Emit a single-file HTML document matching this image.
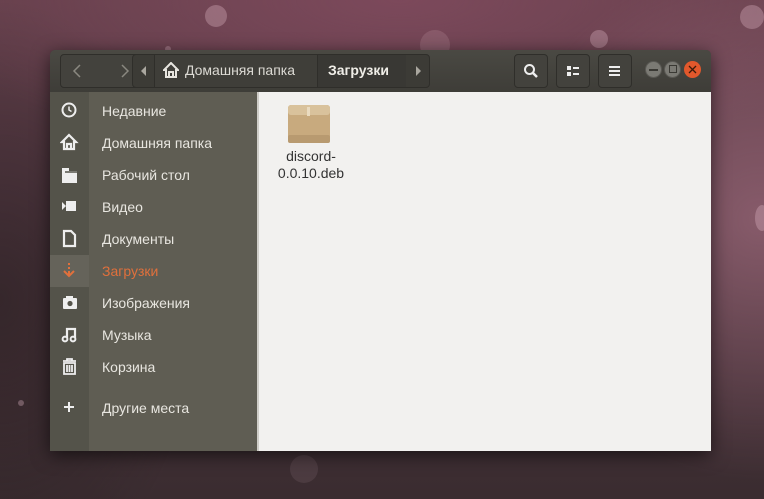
<!DOCTYPE html>
<html><head><meta charset="utf-8"><style>
*{margin:0;padding:0;box-sizing:border-box}
body{width:764px;height:499px;overflow:hidden;position:relative;font-family:"Liberation Sans","DejaVu Sans",sans-serif;
background:
radial-gradient(ellipse 260px 260px at 760px 220px,rgba(180,120,140,.55),transparent),
radial-gradient(ellipse 500px 160px at 400px 0px,rgba(130,75,95,.8),transparent),
radial-gradient(ellipse 200px 300px at 0px 300px,rgba(40,30,32,.6),transparent),
linear-gradient(180deg,#64404b 0%,#523842 40%,#3a2c30 100%);}
.dot{position:absolute;border-radius:50%;background:rgba(220,180,195,.35)}
.win{position:absolute;left:50px;top:50px;width:661px;height:401px;background:#3d3c37;box-shadow:0 4px 18px rgba(0,0,0,.6);border-radius:5px 5px 0 0;overflow:hidden}
.hdr{position:absolute;left:0;top:0;width:661px;height:42px;background:linear-gradient(#4a4943,#3e3d38)}
.btn{position:absolute;top:4px;height:34px;border:1px solid #2f2e2a;border-radius:4px;background:#43423d}
.side1{position:absolute;left:0;top:42px;width:39px;height:359px;background:#54534a}
.side2{position:absolute;left:39px;top:42px;width:168px;height:359px;background:#5f5d53}
.sel{position:absolute;left:0;top:205px;width:39px;height:32px;background:#65635a}
.div{position:absolute;left:207px;top:42px;width:2px;height:359px;background:#cfcdc8}
.cont{position:absolute;left:209px;top:42px;width:452px;height:359px;background:#f2f1ef}
.it{position:absolute;left:52px;font-size:14px;color:#e8e6e0;height:20px;line-height:20px}
.ic{position:absolute;left:10px;width:20px;height:20px}
</style></head><body>
<div class="dot" style="left:205px;top:5px;width:22px;height:22px"></div>
<div class="dot" style="left:420px;top:30px;width:30px;height:30px;opacity:.5"></div>
<div class="dot" style="left:590px;top:30px;width:18px;height:18px"></div>
<div class="dot" style="left:740px;top:5px;width:24px;height:24px"></div>
<div class="dot" style="left:755px;top:205px;width:14px;height:26px"></div>
<div class="dot" style="left:165px;top:46px;width:6px;height:6px"></div>
<div class="dot" style="left:18px;top:400px;width:6px;height:6px"></div>
<div class="dot" style="left:290px;top:455px;width:28px;height:28px;opacity:.3"></div>
<div class="win">
<div class="hdr"></div>
<div class="btn" style="left:10px;width:90px"></div>
<svg style="position:absolute;left:22px;top:14px" width="60" height="14"><path d="M8 1 L2 7 L8 13" stroke="#8a8880" stroke-width="1.5" fill="none"/><path d="M50 1 L56 7 L50 13" stroke="#8a8880" stroke-width="1.5" fill="none"/></svg>
<div class="btn" style="left:82px;width:298px;background:#3c3b36;left:82px"></div>
<div style="position:absolute;left:104px;top:4px;width:164px;height:34px;background:#3f3e39;border:1px solid #2f2e2a"></div>
<div style="position:absolute;left:268px;top:5px;width:88px;height:32px;background:#393834"></div>
<svg style="position:absolute;left:90px;top:15px" width="8" height="12"><path d="M6 1 L1 6 L6 11Z" fill="#aaa79f"/></svg>
<svg style="position:absolute;left:364px;top:15px" width="8" height="12"><path d="M2 1 L7 6 L2 11Z" fill="#aaa79f"/></svg>
<svg style="position:absolute;left:113px;top:12px" width="16" height="16"><path d="M8 1 L1 8 H3 V15 H13 V8 H15 Z M6 15 V10 H10 V15" fill="none" stroke="#e8e6e0" stroke-width="2"/></svg>
<div style="position:absolute;left:135px;top:12px;font-size:14px;color:#dcdad4">Домашняя папка</div>
<div style="position:absolute;left:278px;top:12px;font-size:14px;color:#f0eee8;font-weight:bold">Загрузки</div>
<div class="btn" style="left:464px;width:34px"></div>
<svg style="position:absolute;left:473px;top:13px" width="16" height="16"><circle cx="6.5" cy="6.5" r="4.5" stroke="#eee" stroke-width="2" fill="none"/><path d="M10 10 L14 14" stroke="#eee" stroke-width="2.5"/></svg>
<div class="btn" style="left:506px;width:34px"></div>
<svg style="position:absolute;left:516px;top:14px" width="14" height="14"><rect x="1" y="2" width="4" height="4" fill="#eee"/><rect x="1" y="8" width="4" height="4" fill="#eee"/><rect x="7" y="3" width="6" height="2" fill="#eee"/><rect x="7" y="9" width="6" height="2" fill="#eee"/></svg>
<div class="btn" style="left:548px;width:34px"></div>
<svg style="position:absolute;left:558px;top:14px" width="14" height="14"><rect x="1" y="2" width="11" height="2" fill="#eee"/><rect x="1" y="6" width="11" height="2" fill="#eee"/><rect x="1" y="10" width="11" height="2" fill="#eee"/></svg>
<div style="position:absolute;left:595px;top:11px;width:17px;height:17px;border-radius:50%;background:#7b7a74;border:1px solid #5a5954"></div>
<div style="position:absolute;left:599px;top:19px;width:9px;height:1.5px;background:#3a3934"></div>
<div style="position:absolute;left:614px;top:11px;width:17px;height:17px;border-radius:50%;background:#7b7a74;border:1px solid #5a5954"></div>
<div style="position:absolute;left:619px;top:15px;width:8px;height:8px;border:1.5px solid #3a3934"></div>
<div style="position:absolute;left:634px;top:11px;width:17px;height:17px;border-radius:50%;background:#e2582c"></div>
<svg style="position:absolute;left:638px;top:15px" width="9" height="9"><path d="M1 1 L8 8 M8 1 L1 8" stroke="#3a1a0a" stroke-width="1.3"/></svg>
<div class="side1"></div><div class="side2"></div><div class="sel"></div><div class="div"></div><div class="cont"></div>
<svg class="ic" style="top:51px"><circle cx="9" cy="9" r="6.5" stroke="#eee" stroke-width="2" fill="none"/><path d="M9 5.5 V9 L11.5 10.5" stroke="#eee" stroke-width="1.5" fill="none"/></svg>
<div class="it" style="top:51px">Недавние</div>
<svg class="ic" style="top:83px"><path d="M9 2 L2 9 H4 V16 H14 V9 H16 Z M7 16 V11 H11 V16" fill="none" stroke="#eee" stroke-width="2.2"/></svg>
<div class="it" style="top:83px">Домашняя папка</div>
<svg class="ic" style="top:115px"><path d="M2 3 H9 V6 H17 V18 H2Z" fill="#eee"/><path d="M5 7 H17" stroke="#54534a" stroke-width="1.5"/></svg>
<div class="it" style="top:115px">Рабочий стол</div>
<svg class="ic" style="top:147px"><path d="M2 5 L6 9 L2 13Z" fill="#eee"/><rect x="6" y="4" width="10" height="10" fill="#eee"/></svg>
<div class="it" style="top:147px">Видео</div>
<svg class="ic" style="top:179px"><path d="M4 2 H11 L15 6 V17 H4Z" fill="none" stroke="#eee" stroke-width="2.2"/></svg>
<div class="it" style="top:179px">Документы</div>
<svg class="ic" style="top:211px"><path d="M9 2 V4 M9 6 V8 M9 10 V14 M4 10 L9 15 L14 10" stroke="#e0703c" stroke-width="2" fill="none"/></svg>
<div class="it" style="top:211px;color:#e0703c">Загрузки</div>
<svg class="ic" style="top:243px"><rect x="3" y="5" width="14" height="11" rx="1" fill="#eee"/><rect x="6" y="3" width="7" height="3" fill="#eee"/><circle cx="10" cy="10.5" r="2.6" fill="#54534a"/></svg>
<div class="it" style="top:243px">Изображения</div>
<svg class="ic" style="top:275px"><path d="M7 13 V4 H15 V13" stroke="#eee" stroke-width="2.2" fill="none"/><circle cx="5" cy="14" r="2.4" stroke="#eee" stroke-width="2" fill="none"/><circle cx="13" cy="14" r="2.4" stroke="#eee" stroke-width="2" fill="none"/></svg>
<div class="it" style="top:275px">Музыка</div>
<svg class="ic" style="top:307px"><path d="M3 4 H16 M7 4 V2 H12 V4 M4 6 H15 V17 H4Z M7 8 V15 M9.5 8 V15 M12 8 V15" stroke="#eee" stroke-width="1.8" fill="none"/></svg>
<div class="it" style="top:307px">Корзина</div>
<svg class="ic" style="top:348px"><path d="M9 4 V14 M4 9 H14" stroke="#eee" stroke-width="2"/></svg>
<div class="it" style="top:348px">Другие места</div>
<svg style="position:absolute;left:237px;top:53px" width="44" height="42"><rect x="1" y="2" width="42" height="38" rx="3" fill="#c8aa7e"/><rect x="1" y="2" width="42" height="10" rx="3" fill="#d9c29c"/><rect x="1" y="32" width="42" height="8" rx="2" fill="#b89a70"/><rect x="20" y="4" width="3" height="9" fill="#eadbc0"/></svg>
<div style="position:absolute;left:209px;top:98px;width:104px;text-align:center;font-size:14px;line-height:17px;color:#333">discord-<br>0.0.10.deb</div>
</div>
</body></html>
